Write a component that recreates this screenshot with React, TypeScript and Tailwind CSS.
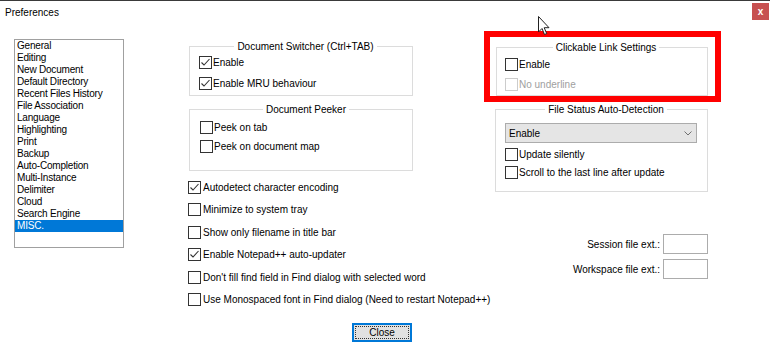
import React from "react";

const Box = ({ checked, disabled }: { checked?: boolean; disabled?: boolean }) => (
  <span
    className={
      disabled
        ? "w-[13px] h-[13px] shrink-0 border border-[#cccccc] bg-white flex items-center justify-center"
        : "w-[13px] h-[13px] shrink-0 border border-[#333333] bg-white flex items-center justify-center"
    }
  >
    {checked && (
      <svg width="11" height="11" viewBox="0 0 11 11">
        <path d="M1.5 5.5 L4 8 L9.5 2" fill="none" stroke="#333" strokeWidth="1.1" />
      </svg>
    )}
  </span>
);

const Row = ({
  label,
  checked,
  disabled,
  gap,
}: {
  label: string;
  checked?: boolean;
  disabled?: boolean;
  gap?: boolean;
}) => (
  <div className={gap ? "flex items-center h-[13px] gap-[2px] whitespace-nowrap" : "flex items-center h-[13px] gap-[1px] whitespace-nowrap"}>
    <Box checked={checked} disabled={disabled} />
    <span className={disabled ? "text-[#a0a0a0] leading-[13px]" : "leading-[13px]"}>{label}</span>
  </div>
);

const items = [
  "General",
  "Editing",
  "New Document",
  "Default Directory",
  "Recent Files History",
  "File Association",
  "Language",
  "Highlighting",
  "Print",
  "Backup",
  "Auto-Completion",
  "Multi-Instance",
  "Delimiter",
  "Cloud",
  "Search Engine",
  "MISC.",
];

export default function App() {
  return (
    <div className="w-[770px] h-[352px] bg-white relative overflow-hidden border-t border-[#3a3a3a] font-['Liberation_Sans',Arial,sans-serif] text-[10px] text-black">
      {/* title bar */}
      <div className="flex justify-between items-start h-[21px]">
        <span className="pl-[5px] pt-[6px] leading-[12px]">Preferences</span>
        <div className="mt-[2px] mr-[1px] w-[17px] h-[17px] bg-[#c75050] text-white flex items-center justify-center text-[10px] font-bold leading-none">
          x
        </div>
      </div>

      {/* body */}
      <div className="flex h-[301px]">
        {/* list */}
        <div className="ml-[14px] mt-[17px] w-[110px] h-[209px] shrink-0 border border-[#a0a0a0] flex flex-col tracking-[-0.2px]">
          {items.map((it) => (
            <div
              key={it}
              className={
                it === "MISC."
                  ? "leading-[12px] h-[12px] pl-[2px] bg-[#0078d7] text-white whitespace-nowrap"
                  : "leading-[12px] h-[12px] pl-[2px] whitespace-nowrap"
              }
            >
              {it}
            </div>
          ))}
        </div>

        {/* middle column */}
        <div className="ml-[64px] mt-[18px] w-[296px] shrink-0 flex flex-col">
          <fieldset className="ml-[1px] w-[224px] border border-[#dcdcdc] pl-[9px] pt-[3px] pb-[5px] flex flex-col gap-[8px]">
            <legend className="mx-auto px-[3px] leading-[13px]">Document Switcher (Ctrl+TAB)</legend>
            <Row label="Enable" checked />
            <Row label="Enable MRU behaviour" checked />
          </fieldset>
          <fieldset className="mt-[7px] ml-[1px] w-[224px] border border-[#dcdcdc] pl-[10px] pt-[5px] pb-[17px] flex flex-col gap-[6px]">
            <legend className="mx-auto px-[3px] leading-[13px]">Document Peeker</legend>
            <Row label="Peek on tab" />
            <Row label="Peek on document map" />
          </fieldset>
          <div className="mt-[10px] flex flex-col gap-[9.4px]">
            <Row gap label="Autodetect character encoding" checked />
            <Row gap label="Minimize to system tray" />
            <Row gap label="Show only filename in title bar" />
            <Row gap label="Enable Notepad++ auto-updater" checked />
            <Row gap label="Don't fill find field in Find dialog with selected word" />
            <Row gap label="Use Monospaced font in Find dialog (Need to restart Notepad++)" />
          </div>
        </div>

        {/* right column */}
        <div className="pt-[9px] w-[237px] shrink-0 flex flex-col">
          <div className="border-[6px] border-[#ff0000] h-[71px]">
            <fieldset className="ml-[6px] mt-[4px] w-[212px] border border-[#dcdcdc] pl-[8px] pt-[4px] pb-[4px] flex flex-col gap-[7px]">
              <legend className="mx-auto px-[3px] leading-[13px]">Clickable Link Settings</legend>
              <Row label="Enable" />
              <Row label="No underline" disabled />
            </fieldset>
          </div>
          <fieldset className="mt-[1px] ml-[11px] w-[213px] border border-[#dcdcdc] pl-[9px] pt-[7px] pb-[12px] flex flex-col">
            <legend className="mx-auto px-[3px] leading-[13px]">File Status Auto-Detection</legend>
            <div className="w-[192px] h-[20px] border border-[#acacac] bg-[#e5e5e5] flex items-center justify-between pl-[3px] pr-[4px]">
              <span className="leading-[13px]">Enable</span>
              <svg width="8" height="5" viewBox="0 0 8 5">
                <path d="M0.5 0.5 L4 4 L7.5 0.5" fill="none" stroke="#707070" strokeWidth="1" />
              </svg>
            </div>
            <div className="mt-[5px] flex flex-col gap-[5px]">
              <Row label="Update silently" />
              <Row label="Scroll to the last line after update" />
            </div>
          </fieldset>
          <div className="mt-[42px] pr-[13px] flex flex-col items-end gap-[5px]">
            <div className="flex items-center gap-[3px]">
              <span className="leading-[13px]">Session file ext.:</span>
              <div className="w-[45px] h-[20px] border border-[#acacac] bg-white" />
            </div>
            <div className="flex items-center gap-[3px]">
              <span className="leading-[13px]">Workspace file ext.:</span>
              <div className="w-[45px] h-[20px] border border-[#acacac] bg-white" />
            </div>
          </div>
        </div>
      </div>

      {/* close button row */}
      <div className="pl-[352px]">
        <div className="w-[60px] h-[19px] border-2 border-[#0078d7] bg-[#e1e1e1] p-[1px]">
          <div className="w-full h-full border border-dotted border-[#333] flex items-center justify-center leading-[13px]">
            Close
          </div>
        </div>
      </div>

      {/* mouse cursor overlay */}
      <svg className="absolute left-[538px] top-[15px]" width="13" height="20" viewBox="0 0 13 20">
        <path
          d="M0.5 0.5 L0.5 16 L4 12.5 L6.5 18.5 L8.7 17.5 L6.2 11.7 L11 11.7 Z"
          fill="white"
          stroke="#222"
          strokeWidth="1"
          strokeLinejoin="miter"
        />
      </svg>
    </div>
  );
}
